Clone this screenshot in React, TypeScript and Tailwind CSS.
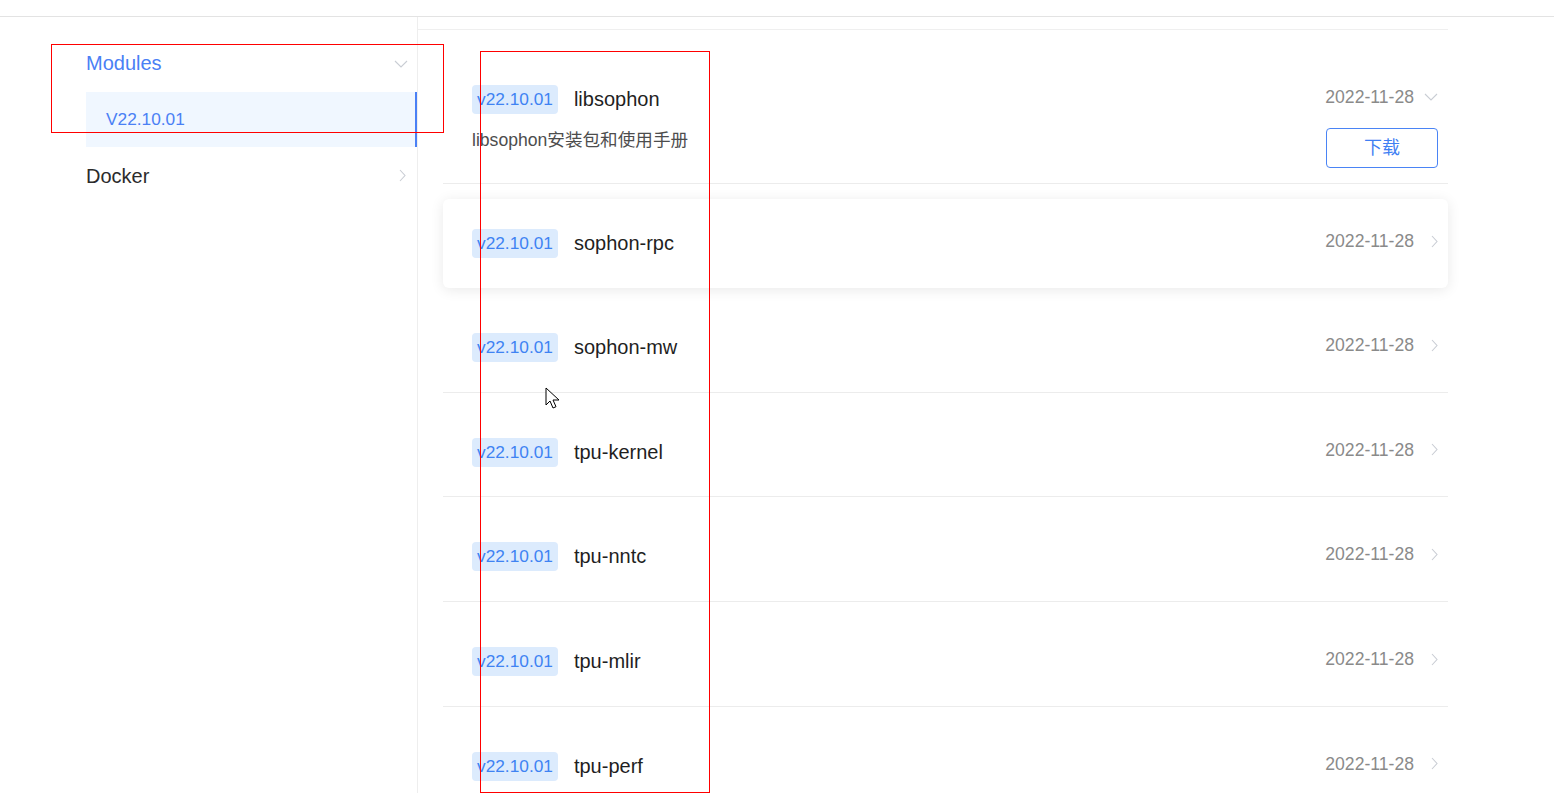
import { ReactNode } from 'react'

const rows = ['sophon-rpc', 'sophon-mw', 'tpu-kernel', 'tpu-nntc', 'tpu-mlir', 'tpu-perf']

function ChevronDown({ className = '' }: { className?: string }) {
  return (
    <svg width="14" height="8" viewBox="0 0 14 8" fill="none" className={className}>
      <path d="M1 1l6 6 6-6" stroke="#c9cdd4" strokeWidth="1.1" />
    </svg>
  )
}

function ChevronRight({ className = '' }: { className?: string }) {
  return (
    <svg width="7" height="13" viewBox="0 0 7 13" fill="none" className={className}>
      <path d="M1 1l5 5.5L1 12" stroke="#c9cdd4" strokeWidth="1.1" />
    </svg>
  )
}

function Tag() {
  return (
    <span className="h-[29px] px-[5px] rounded-[4px] bg-[#dcebfd] text-[#3f83f3] text-[17.3px] leading-[29px]">
      v22.10.01
    </span>
  )
}

function RowHead({ title, right }: { title: string; right: ReactNode }) {
  return (
    <div className="flex items-center h-[29px]">
      <Tag />
      <span className="ml-[16px] text-[20px] leading-[26px] mb-[1px] text-[#1f1f1f]">{title}</span>
      <div className="ml-auto flex items-center mb-[5px]">
        <span className="text-[17.6px] text-[#8a8a8a]">2022-11-28</span>
        <div className="ml-[10px] w-[14px] flex justify-end">{right}</div>
      </div>
    </div>
  )
}

export default function App() {
  return (
    <div className="relative h-[793px] overflow-hidden bg-white font-['Liberation_Sans','Noto_Sans_CJK_SC',sans-serif]">
      <div className="h-[17px] border-b border-[#e3e3e3]" />

      <div className="flex">
        {/* sidebar */}
        <aside className="w-[418px] h-[776px] border-r border-[#eeeeee] pl-[86px] pt-[19px]">
          <div className="h-[56px] flex items-center justify-between pr-[9px]">
            <span className="text-[20px] mb-[2px] text-[#4a80f5]">Modules</span>
            <ChevronDown />
          </div>
          <div className="h-[55px] flex items-center pl-[20px] bg-[#f0f7ff] border-r-2 border-[#4a80f5]">
            <span className="text-[17.3px] text-[#4a80f5]">V22.10.01</span>
          </div>
          <div className="h-[56px] flex items-center justify-between pr-[11px]">
            <span className="text-[20px] mt-[2px] text-[#2b2b2b]">Docker</span>
            <ChevronRight />
          </div>
        </aside>

        {/* main list */}
        <main className="w-[1030px] mt-[12px] border-t border-[#efefef]">
          <div className="ml-[25px]">
            <div className="pt-[55px] pl-[29px] pr-[10px] pb-[15px] border-b border-[#ececec]">
              <RowHead title="libsophon" right={<ChevronDown />} />
              <div className="mt-[14px] flex items-start">
                <span className="text-[17.6px] leading-[24px] text-[#4d4d4d]">libsophon安装包和使用手册</span>
                <button className="ml-auto w-[112px] h-[40px] rounded-[4px] border border-[#4a84f5] text-[#3f7ff3] text-[18px]">
                  下载
                </button>
              </div>
            </div>

            {rows.map((name, i) => (
              <div
                key={name}
                className={`pl-[29px] pr-[10px] flex flex-col justify-center ${
                  i === 0
                    ? 'mt-[15px] h-[89px] rounded-[6px] bg-white shadow-[0_2px_14px_rgba(0,0,0,0.09)]'
                    : 'mt-[15.67px] h-[89px] border-b border-[#ececec]'
                }`}
              >
                <RowHead title={name} right={<ChevronRight />} />
              </div>
            ))}
          </div>
        </main>
      </div>

      {/* annotation boxes */}
      <div className="absolute left-[51px] top-[44px] w-[393px] h-[89px] border border-[#ff0000] pointer-events-none" />
      <div className="absolute left-[480px] top-[51px] w-[230px] h-[742px] border border-[#ff0000] pointer-events-none" />

      {/* mouse cursor */}
      <svg className="absolute left-[545px] top-[387px]" width="16" height="24" viewBox="0 0 16 24">
        <path d="M1 1v17l4-4 3 7 3-1.3-3-6.7h6z" fill="#fff" stroke="#000" strokeWidth="1" strokeLinejoin="round" />
      </svg>
    </div>
  )
}
